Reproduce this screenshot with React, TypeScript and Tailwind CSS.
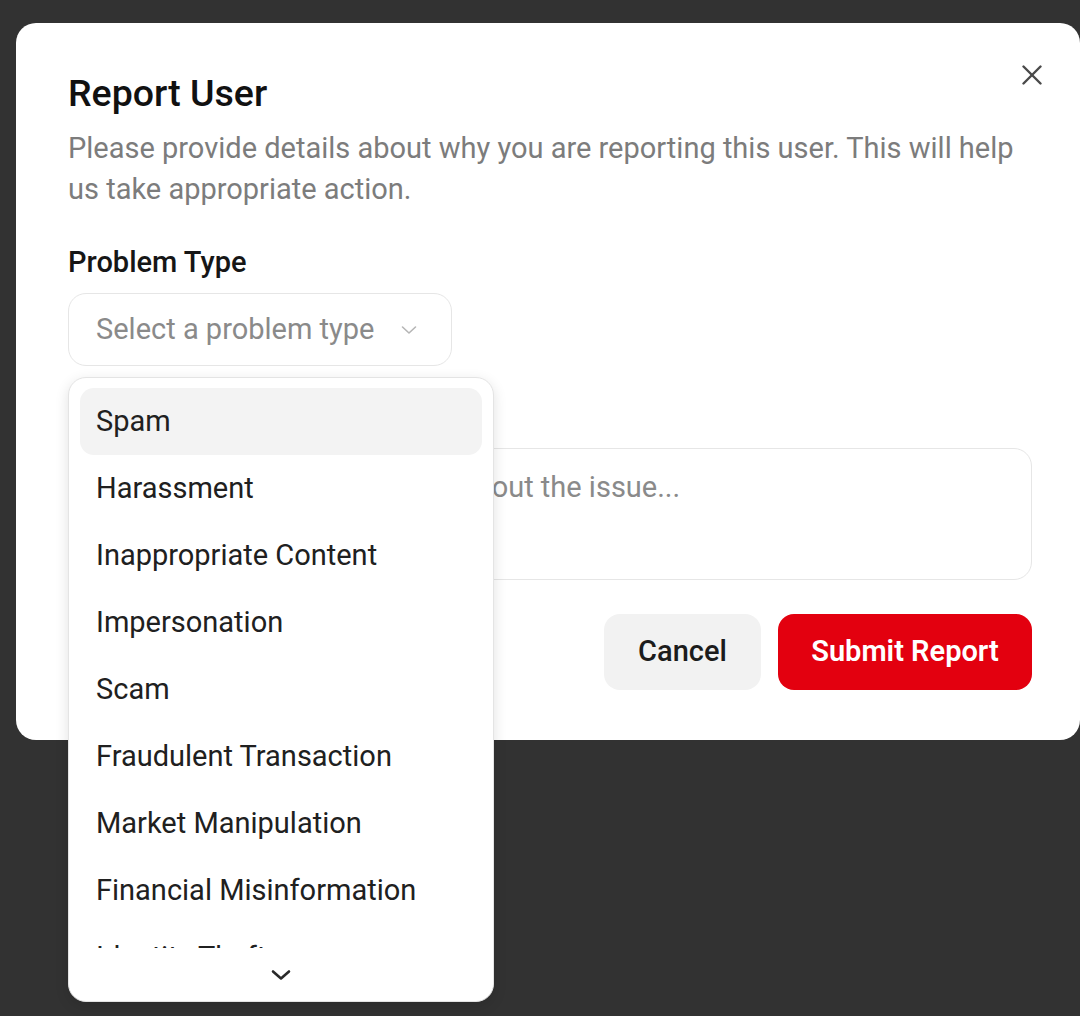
import React from "react";

const items = [
  "Spam",
  "Harassment",
  "Inappropriate Content",
  "Impersonation",
  "Scam",
  "Fraudulent Transaction",
  "Market Manipulation",
  "Financial Misinformation",
  "Identity Theft",
  "Other",
];

export default function App() {
  return (
    <div
      className="w-[1080px] h-[1016px] bg-[#323232] overflow-hidden relative"
      style={{ fontFamily: "Roboto, 'Noto Sans', sans-serif" }}
    >
      <div className="absolute left-[16px] top-[23px] w-[1064px] bg-white rounded-[20px] pl-[52px] pr-[48px] pt-[50px] pb-[50px]">
        <button className="absolute left-[1006px] top-[42px] w-[20px] h-[20px] flex items-center justify-center">
          <svg width="20" height="20" viewBox="0 0 20 20" fill="none" stroke="#4a4a4a" strokeWidth="2.4" strokeLinecap="round">
            <path d="M1.5 1.5 18.5 18.5" />
            <path d="M18.5 1.5 1.5 18.5" />
          </svg>
        </button>
        <h2 className="text-[37.5px] leading-[40px] font-medium text-[#111111]">Report User</h2>
        <p className="mt-[15px] text-[29px] leading-[41px] text-[#7c7c7c]">
          Please provide details about why you are reporting this user. This will help us take appropriate action.
        </p>

        <div className="mt-[34px] flex flex-col gap-[13px]">
          <label className="text-[29px] leading-[36px] font-medium text-[#161616]">Problem Type</label>
          <div className="relative">
            <div className="w-[384px] h-[73px] border border-[#e6e6e6] rounded-[18px] flex items-center pl-[27px] pr-[34px] justify-between">
              <span className="text-[29px] text-[#8a8a8a]">Select a problem type</span>
              <svg width="16" height="10" viewBox="0 0 16 10" fill="none" stroke="#b5b5b5" strokeWidth="1.6" strokeLinecap="round" strokeLinejoin="round">
                <path d="M1.5 2 8 8 14.5 2" />
              </svg>
            </div>
          </div>
        </div>

        <div className="mt-[33px] flex flex-col gap-[13px]">
          <label className="text-[29px] leading-[36px] font-medium text-[#161616]">Description</label>
          <div className="w-full h-[132px] border border-[#e6e6e6] rounded-[18px] px-[27px] py-[20px]">
            <span className="text-[29px] leading-[36px] text-[#8a8a8a]">Please provide more details about the issue...</span>
          </div>
        </div>

        <div className="mt-[34px] flex justify-end gap-[17px]">
          <button className="w-[157px] h-[76px] rounded-[16px] bg-[#f2f2f2] text-[29px] font-medium text-[#1c1c1c]">
            Cancel
          </button>
          <button className="w-[254px] h-[76px] rounded-[16px] bg-[#e3000f] text-[29px] font-semibold text-white">
            Submit Report
          </button>
        </div>
      </div>

      <div className="absolute left-[68px] top-[377px] w-[426px] h-[625px] bg-white border border-[#e4e4e4] rounded-[18px] shadow-[0_4px_14px_rgba(0,0,0,0.12)] overflow-hidden flex flex-col">
        <div className="h-[570px] overflow-hidden px-[11px] pt-[10px]">
          {items.map((it, i) => (
            <div
              key={it}
              className={
                i === 0
                  ? "h-[67px] flex items-center pl-[16px] rounded-[14px] bg-[#f3f3f3] text-[29px] text-[#202020]"
                  : "h-[67px] flex items-center pl-[16px] rounded-[14px] text-[29px] text-[#202020]"
              }
            >
              {it}
            </div>
          ))}
        </div>
        <div className="flex-1 flex items-center justify-center">
          <svg width="22" height="14" viewBox="0 0 22 14" fill="none" stroke="#2a2a2a" strokeWidth="2.6" strokeLinecap="round" strokeLinejoin="round">
            <path d="M3 3.5 11 10.5 19 3.5" />
          </svg>
        </div>
      </div>
    </div>
  );
}
